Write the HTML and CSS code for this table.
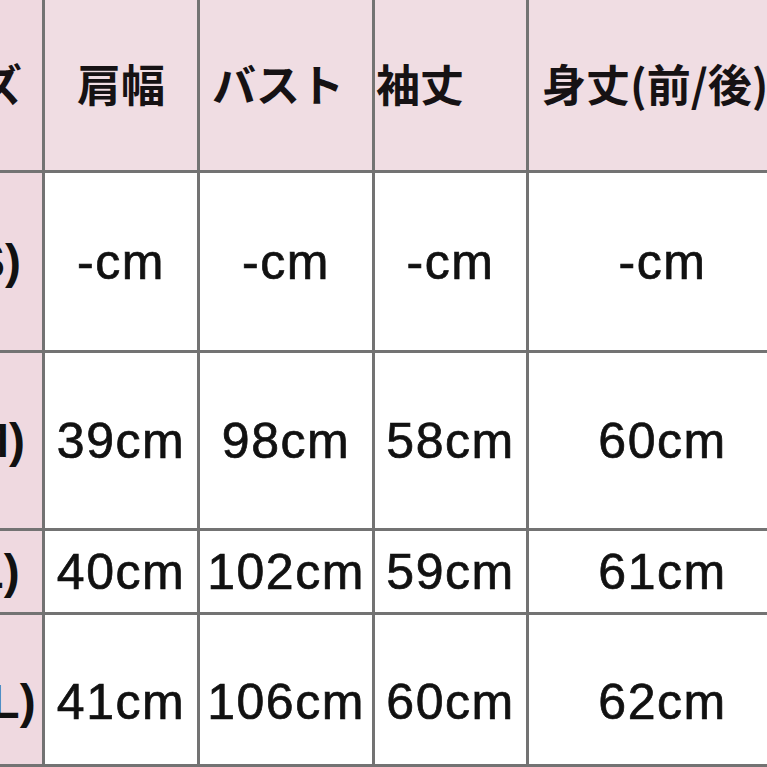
FILE: index.html
```html
<!DOCTYPE html>
<html lang="ja">
<head>
<meta charset="utf-8">
<title>サイズ表</title>
<link rel="stylesheet" href="styles.css">
</head>
<body>
<div class="sheet">
  <div class="cell head label-head">サイズ</div>
  <div class="cell head">肩幅</div>
  <div class="cell head head-left pad-bust">バスト</div>
  <div class="cell head head-left pad-sleeve">袖丈</div>
  <div class="cell head head-left pad-length">身丈(前/後)</div>

  <div class="cell label">(S)</div>
  <div class="cell data">-cm</div>
  <div class="cell data">-cm</div>
  <div class="cell data">-cm</div>
  <div class="cell data">-cm</div>

  <div class="cell label">(M)</div>
  <div class="cell data">39cm</div>
  <div class="cell data">98cm</div>
  <div class="cell data">58cm</div>
  <div class="cell data">60cm</div>

  <div class="cell label">(L)</div>
  <div class="cell data">40cm</div>
  <div class="cell data">102cm</div>
  <div class="cell data">59cm</div>
  <div class="cell data">61cm</div>

  <div class="cell label low">(XL)</div>
  <div class="cell data low">41cm</div>
  <div class="cell data low">106cm</div>
  <div class="cell data low">60cm</div>
  <div class="cell data low">62cm</div>
</div>
</body>
</html>
```
FILE: styles.css
```css
html, body {
  margin: 0;
  padding: 0;
  overflow: hidden;
  background: #ffffff;
}

.sheet {
  display: grid;
  grid-template-columns: 106px 152px 172px 151px 267px;
  grid-template-rows: 175px 177px 175px 81px 149px;
  gap: 3px;
  padding: 3px;
  background: #737373;
  width: max-content;
  margin: -8px 0 0 -67px;
}

.cell {
  display: flex;
  align-items: center;
  justify-content: center;
  background: #ffffff;
  color: #111111;
  white-space: nowrap;
  overflow: hidden;
}

.head {
  background: #f0dde3;
  font-family: "Noto Sans CJK JP", "Noto Sans", sans-serif;
  font-weight: 700;
  font-size: 44px;
  color: #161214;
}

.label-head {
  justify-content: flex-end;
  padding-right: 20px;
  background: #efd9e0;
}

.head-left {
  justify-content: flex-start;
}

.pad-bust { padding-left: 12px; }
.pad-sleeve { padding-left: 1px; }
.pad-length { padding-left: 13px; }

.label {
  background: #efd9e0;
  font-family: "Liberation Sans", Arial, sans-serif;
  font-weight: 700;
  font-size: 48px;
}

.data {
  font-family: "Liberation Sans", Arial, sans-serif;
  font-size: 50px;
  letter-spacing: 1.5px;
  -webkit-text-stroke: 0.7px #111111;
}

.low {
  padding-top: 24px;
}
```
